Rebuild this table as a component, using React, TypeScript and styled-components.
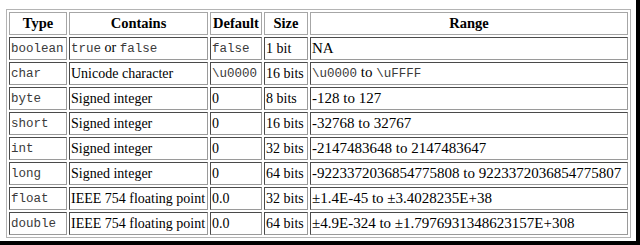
import React from "react";
import styled, { createGlobalStyle } from "styled-components";

const GlobalStyle = createGlobalStyle`
  html, body {
    margin: 0;
    padding: 0;
    background: #ffffff;
  }
`;

const Frame = styled.div`
  box-sizing: border-box;
  width: 640px;
  height: 245px;
  padding: 9px 0 0 6px;
  background: #ffffff;
  border-right: 4px solid #000000;
  border-bottom: 4px solid #000000;
  font-family: "Liberation Serif", "Times New Roman", serif;
  color: #000000;
`;

const Table = styled.table`
  border-collapse: separate;
  border-spacing: 2px;
  border: 1px solid #b4b4b4;
  table-layout: fixed;
`;

const Th = styled.th<{ $w: number }>`
  box-sizing: border-box;
  width: ${(p) => p.$w}px;
  height: 23px;
  padding: 0 1px;
  border: 1px solid #a6a6a6;
  font-size: 14.5px;
  font-weight: bold;
  text-align: center;
  vertical-align: middle;
  white-space: nowrap;
  line-height: 19px;
`;

const Td = styled.td<{ $wide?: boolean }>`
  box-sizing: border-box;
  height: 23px;
  padding: 0 1px;
  border: 1px solid;
  border-color: #4a4a4a #9a9a9a #9a9a9a #4a4a4a;
  font-size: ${(p) => (p.$wide ? "15px" : "14px")};
  text-align: left;
  vertical-align: middle;
  white-space: nowrap;
  overflow: hidden;
  line-height: 19px;
`;

// thin courier look of the original
const Code = styled.span`
  font-family: "Liberation Mono", "Courier New", monospace;
  font-size: 12.5px;
  color: #3a3a3a;
`;

type Row = {
  type: string;
  contains: React.ReactNode;
  def: React.ReactNode;
  size: string;
  range: React.ReactNode;
};

const rows: Row[] = [
  {
    type: "boolean",
    contains: (
      <>
        <Code>true</Code> or <Code>false</Code>
      </>
    ),
    def: <Code>false</Code>,
    size: "1 bit",
    range: "NA",
  },
  {
    type: "char",
    contains: "Unicode character",
    def: <Code>\u0000</Code>,
    size: "16 bits",
    range: (
      <>
        <Code>\u0000</Code> to <Code>\uFFFF</Code>
      </>
    ),
  },
  { type: "byte", contains: "Signed integer", def: "0", size: "8 bits", range: "-128 to 127" },
  { type: "short", contains: "Signed integer", def: "0", size: "16 bits", range: "-32768 to 32767" },
  {
    type: "int",
    contains: "Signed integer",
    def: "0",
    size: "32 bits",
    range: "-2147483648 to 2147483647",
  },
  {
    type: "long",
    contains: "Signed integer",
    def: "0",
    size: "64 bits",
    range: "-9223372036854775808 to 9223372036854775807",
  },
  {
    type: "float",
    contains: "IEEE 754 floating point",
    def: "0.0",
    size: "32 bits",
    range: "±1.4E-45 to ±3.4028235E+38",
  },
  {
    type: "double",
    contains: "IEEE 754 floating point",
    def: "0.0",
    size: "64 bits",
    range: "±4.9E-324 to ±1.7976931348623157E+308",
  },
];

const App = () => {
  return (
    <>
      <GlobalStyle />
      <Frame>
        <Table>
          <thead>
            <tr>
              <Th $w={58}>Type</Th>
              <Th $w={139}>Contains</Th>
              <Th $w={52}>Default</Th>
              <Th $w={44}>Size</Th>
              <Th $w={318}>Range</Th>
            </tr>
          </thead>
          <tbody>
            {rows.map((r) => (
              <tr key={r.type}>
                <Td>
                  <Code>{r.type}</Code>
                </Td>
                <Td>{r.contains}</Td>
                <Td>{r.def}</Td>
                <Td>{r.size}</Td>
                <Td $wide>{r.range}</Td>
              </tr>
            ))}
          </tbody>
        </Table>
      </Frame>
    </>
  );
};

export default App;
